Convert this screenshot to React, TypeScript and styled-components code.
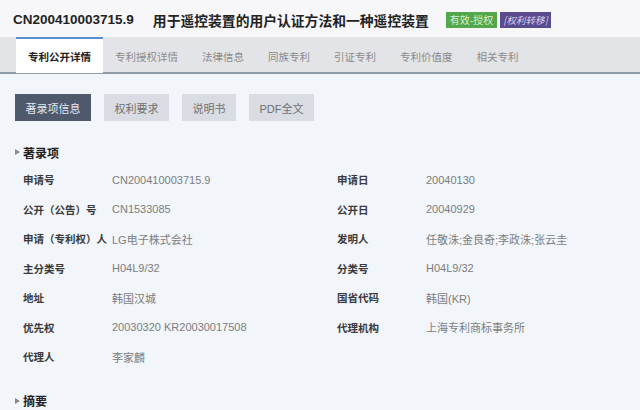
import styled, { createGlobalStyle } from 'styled-components';

const GlobalStyle = createGlobalStyle`
  html, body {
    margin: 0;
    padding: 0;
    background: #f2f5fa;
  }
  body {
    font-family: "Liberation Sans", "Noto Sans CJK SC", sans-serif;
  }
`;

const Page = styled.div`
  width: 640px;
  height: 410px;
  overflow: hidden;
  background: #f2f5fa;
`;

const Header = styled.div`
  height: 37px;
  background: #f7f7fa;
  display: flex;
  align-items: center;
  padding: 2px 0 0 13px;
  box-sizing: border-box;
`;

const PatentNo = styled.span`
  font-size: 13.5px;
  font-weight: bold;
  color: #222;
`;

const PatentTitle = styled.span`
  font-family: "Noto Sans CJK SC", sans-serif;
  font-size: 13.8px;
  font-weight: bold;
  color: #222;
  margin-left: 19px;
`;

const Badge = styled.span<{ $tone: 'green' | 'purple' }>`
  display: inline-flex;
  align-items: center;
  justify-content: center;
  height: 16px;
  padding: 0 ${(p) => (p.$tone === 'green' ? '4px' : '3px')};
  font-family: "Noto Sans CJK SC", sans-serif;
  font-size: ${(p) => (p.$tone === 'green' ? '10px' : '9.5px')};
  margin-left: ${(p) => (p.$tone === 'green' ? '17px' : '3px')};
  background: ${(p) => (p.$tone === 'green' ? '#52a84b' : '#5a4b8e')};
  color: ${(p) => (p.$tone === 'green' ? '#d9f0d4' : '#d8d0f0')};
  font-style: ${(p) => (p.$tone === 'purple' ? 'italic' : 'normal')};
`;

const TabBar = styled.div`
  height: 35px;
  background: #e3e4e7;
  border-bottom: 2px solid #8d9ca7;
  display: flex;
  padding-left: 16px;
`;

const Tab = styled.div<{ $active?: boolean }>`
  display: flex;
  align-items: center;
  padding: 0 12px;
  font-family: "Noto Sans CJK SC", sans-serif;
  font-size: 10.5px;
  box-sizing: border-box;
  border-top: 2px solid ${(p) => (p.$active ? '#5a8dcc' : 'transparent')};
  background: ${(p) => (p.$active ? '#ffffff' : 'transparent')};
  color: ${(p) => (p.$active ? '#222' : '#8a8a8a')};
  font-weight: ${(p) => (p.$active ? 'bold' : 'normal')};
  margin-bottom: -1px;
`;

const Content = styled.div`
  padding: 20px 0 0 15px;
`;

const ButtonRow = styled.div`
  display: flex;
  gap: 13px;
`;

const SubButton = styled.div<{ $active?: boolean }>`
  height: 27px;
  padding: 0 10.5px;
  display: flex;
  align-items: center;
  font-family: "Liberation Sans", "Noto Sans CJK SC", sans-serif;
  font-size: 11px;
  background: ${(p) => (p.$active ? '#4f596c' : '#d9dce2')};
  color: ${(p) => (p.$active ? '#e4e8f0' : '#707070')};
`;

const SectionTitle = styled.div<{ $top: number }>`
  display: flex;
  align-items: center;
  height: 20px;
  margin-top: ${(p) => p.$top}px;
  font-family: "Noto Sans CJK SC", sans-serif;
  font-size: 12px;
  font-weight: bold;
  color: #222;

  &::before {
    content: '';
    width: 0;
    height: 0;
    border-top: 3.5px solid transparent;
    border-bottom: 3.5px solid transparent;
    border-left: 5px solid #8a8a8a;
    margin-right: 3px;
  }
`;

const InfoGrid = styled.div`
  display: grid;
  grid-template-columns: 314px 300px;
  grid-auto-rows: 29.5px;
  margin-top: 3px;
  padding-left: 8px;
`;

const Field = styled.div`
  display: grid;
  grid-template-columns: 89px 1fr;
  align-items: center;
`;

const Label = styled.span`
  font-family: "Noto Sans CJK SC", sans-serif;
  font-size: 10.5px;
  font-weight: bold;
  color: #3a3a3a;
  white-space: nowrap;
`;

const Value = styled.span`
  font-family: "Liberation Sans", "Noto Sans CJK SC", sans-serif;
  font-size: 11px;
  color: #7d7d7d;
  white-space: nowrap;
`;

const tabs = ['专利公开详情', '专利授权详情', '法律信息', '同族专利', '引证专利', '专利价值度', '相关专利'];
const buttons = ['著录项信息', '权利要求', '说明书', 'PDF全文'];

const rows: [string, string][] = [
  ['申请号', 'CN200410003715.9'],
  ['申请日', '20040130'],
  ['公开（公告）号', 'CN1533085'],
  ['公开日', '20040929'],
  ['申请（专利权）人', 'LG电子株式会社'],
  ['发明人', '任敬洙;金良奇;李政洙;张云圭'],
  ['主分类号', 'H04L9/32'],
  ['分类号', 'H04L9/32'],
  ['地址', '韩国汉城'],
  ['国省代码', '韩国(KR)'],
  ['优先权', '20030320 KR20030017508'],
  ['代理机构', '上海专利商标事务所'],
  ['代理人', '李家麟'],
];

const App = () => {
  return (
    <Page>
      <GlobalStyle />
      <Header>
        <PatentNo>CN200410003715.9</PatentNo>
        <PatentTitle>用于遥控装置的用户认证方法和一种遥控装置</PatentTitle>
        <Badge $tone="green">有效-授权</Badge>
        <Badge $tone="purple">[权利转移]</Badge>
      </Header>
      <TabBar>
        {tabs.map((t, i) => (
          <Tab key={t} $active={i === 0}>{t}</Tab>
        ))}
      </TabBar>
      <Content>
        <ButtonRow>
          {buttons.map((b, i) => (
            <SubButton key={b} $active={i === 0}>{b}</SubButton>
          ))}
        </ButtonRow>
        <SectionTitle $top={21}>著录项</SectionTitle>
        <InfoGrid>
          {rows.map(([label, value]) => (
            <Field key={label}>
              <Label>{label}</Label>
              <Value>{value}</Value>
            </Field>
          ))}
        </InfoGrid>
        <SectionTitle $top={19}>摘要</SectionTitle>
      </Content>
    </Page>
  );
};

export default App;
